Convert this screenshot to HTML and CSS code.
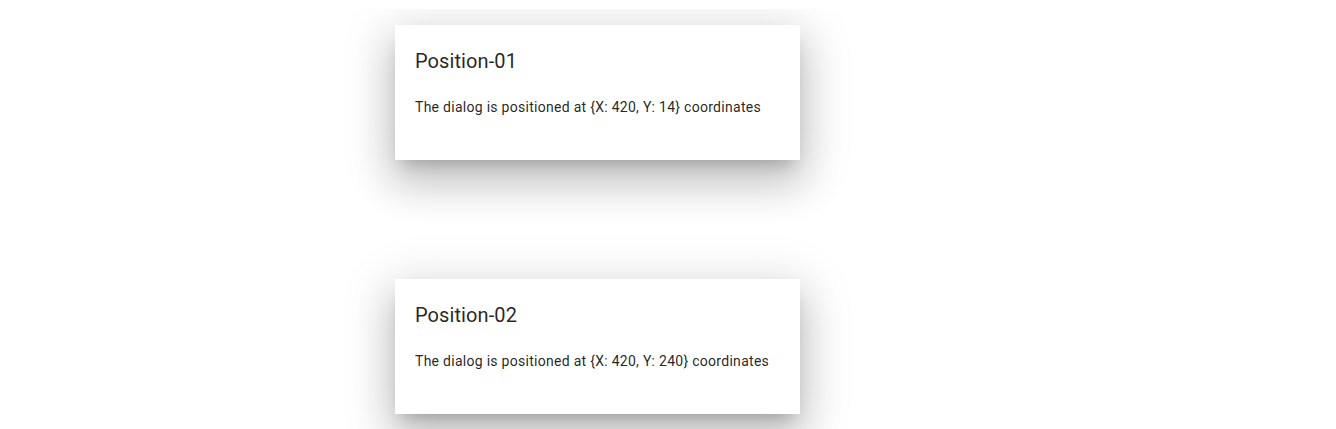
FILE: index.html
```html
<!DOCTYPE html>
<html>
<head>
<meta charset="utf-8">
<link rel="stylesheet" href="styles.css">
</head>
<body>
<div class="canvas">
  <div class="dialog">
    <div class="title">Position-01</div>
    <div class="content">The dialog is positioned at {X: 420, Y: 14} coordinates</div>
  </div>
  <div class="dialog">
    <div class="title">Position-02</div>
    <div class="content">The dialog is positioned at {X: 420, Y: 240} coordinates</div>
  </div>
</div>
</body>
</html>
```
FILE: styles.css
```css
html, body {
  margin: 0;
  padding: 0;
  background: #fff;
  font-family: Roboto, "Liberation Sans", sans-serif;
}
.canvas {
  margin-top: 9px;
  height: 420px;
  overflow: hidden;
  box-sizing: border-box;
  padding: 16px 0 0 395px;
  display: flex;
  flex-direction: column;
  gap: 119px;
}
.dialog {
  width: 405px;
  height: 135px;
  box-sizing: border-box;
  background: #fff;
  padding: 20px;
  flex: none;
  box-shadow: 0 11px 15px -7px rgba(0,0,0,.2), 0 24px 38px 3px rgba(0,0,0,.14), 0 9px 46px 8px rgba(0,0,0,.12);
}
.title {
  font-size: 20px;
  line-height: 32px;
  letter-spacing: 0.1px;
  color: rgba(0,0,0,.87);
}
.content {
  margin-top: 20px;
  font-size: 14px;
  line-height: 20px;
  letter-spacing: 0.28px;
  color: rgba(0,0,0,.87);
}
```
